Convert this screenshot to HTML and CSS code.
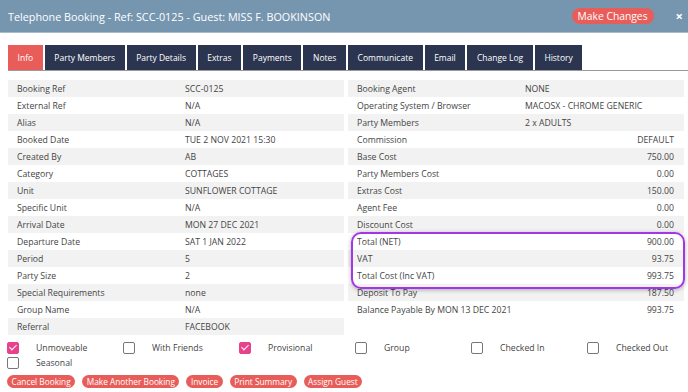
FILE: index.html
```html
<!DOCTYPE html>
<html lang="en">
<head>
  <meta charset="UTF-8" />
  <title>Telephone Booking - SCC-0125</title>
  <link rel="stylesheet" href="styles.css">
</head>
<body>
  <div class="header">
    <div class="title">Telephone Booking - Ref: SCC-0125 - Guest: MISS F. BOOKINSON</div>
    <span class="pill pill-lg">Make Changes</span>
    <span class="close">&times;</span>
  </div>

  <div class="tabs">
    <div class="tab active">Info</div>
    <div class="tab">Party Members</div>
    <div class="tab">Party Details</div>
    <div class="tab">Extras</div>
    <div class="tab">Payments</div>
    <div class="tab">Notes</div>
    <div class="tab">Communicate</div>
    <div class="tab">Email</div>
    <div class="tab">Change Log</div>
    <div class="tab">History</div>
  </div>

  <div class="details">
    <table class="info">
      <tr><td>Booking Ref</td><td>SCC-0125</td></tr>
      <tr><td>External Ref</td><td>N/A</td></tr>
      <tr><td>Alias</td><td>N/A</td></tr>
      <tr><td>Booked Date</td><td>TUE 2 NOV 2021 15:30</td></tr>
      <tr><td>Created By</td><td>AB</td></tr>
      <tr><td>Category</td><td>COTTAGES</td></tr>
      <tr><td>Unit</td><td>SUNFLOWER COTTAGE</td></tr>
      <tr><td>Specific Unit</td><td>N/A</td></tr>
      <tr><td>Arrival Date</td><td>MON 27 DEC 2021</td></tr>
      <tr><td>Departure Date</td><td>SAT 1 JAN 2022</td></tr>
      <tr><td>Period</td><td>5</td></tr>
      <tr><td>Party Size</td><td>2</td></tr>
      <tr><td>Special Requirements</td><td>none</td></tr>
      <tr><td>Group Name</td><td>N/A</td></tr>
      <tr><td>Referral</td><td>FACEBOOK</td></tr>
    </table>

    <div class="costs-wrap">
      <table class="info">
        <tr><td>Booking Agent</td><td>NONE</td></tr>
        <tr><td>Operating System / Browser</td><td>MACOSX - CHROME GENERIC</td></tr>
        <tr><td>Party Members</td><td>2 x ADULTS</td></tr>
        <tr><td>Commission</td><td class="num">DEFAULT</td></tr>
        <tr><td>Base Cost</td><td class="num">750.00</td></tr>
        <tr><td>Party Members Cost</td><td class="num">0.00</td></tr>
        <tr><td>Extras Cost</td><td class="num">150.00</td></tr>
        <tr><td>Agent Fee</td><td class="num">0.00</td></tr>
        <tr><td>Discount Cost</td><td class="num">0.00</td></tr>
        <tr><td>Total (NET)</td><td class="num">900.00</td></tr>
        <tr><td>VAT</td><td class="num">93.75</td></tr>
        <tr><td>Total Cost (Inc VAT)</td><td class="num">993.75</td></tr>
        <tr><td>Deposit To Pay</td><td class="num">187.50</td></tr>
        <tr><td>Balance Payable By MON 13 DEC 2021</td><td class="num">993.75</td></tr>
      </table>
      <div class="highlight"></div>
    </div>
  </div>

  <div class="flags">
    <label class="flag"><span class="box checked"></span>Unmoveable</label>
    <label class="flag"><span class="box"></span>With Friends</label>
    <label class="flag"><span class="box checked"></span>Provisional</label>
    <label class="flag"><span class="box"></span>Group</label>
    <label class="flag"><span class="box"></span>Checked In</label>
    <label class="flag"><span class="box"></span>Checked Out</label>
    <label class="flag"><span class="box"></span>Seasonal</label>
  </div>

  <div class="actions">
    <span class="pill">Cancel Booking</span>
    <span class="pill">Make Another Booking</span>
    <span class="pill">Invoice</span>
    <span class="pill">Print Summary</span>
    <span class="pill">Assign Guest</span>
  </div>
</body>
</html>
```

FILE: styles.css
```css
body {
  font-family: 'Open Sans', 'Liberation Sans', sans-serif;
  margin: 0;
  padding: 0;
  background: #ffffff;
  color: #333;
}

.header {
  height: 32px;
  background: #7696b0;
  border-bottom: 1px solid #a9bccb;
  display: flex;
  align-items: center;
  padding: 0 8px;
  color: #fff;
}

.title {
  font-size: 10.8px;
  flex: 1;
}

.pill {
  background: #e85d5a;
  color: #fff;
  border-radius: 8px;
  font-size: 8.3px;
  line-height: 13px;
  padding: 0 4.5px;
  display: inline-block;
  white-space: nowrap;
}

.pill-lg {
  font-size: 10.3px;
  line-height: 16px;
  border-radius: 9px;
  padding: 0 6px;
  margin-right: 22px;
}

.close {
  font-size: 13px;
  font-weight: bold;
  margin-right: -3px;
}

/* tabs */
.tabs {
  display: flex;
  gap: 2px;
  margin: 12px 0 0 8px;
  border-bottom: 1px solid #9a9a9a;
}

.tab {
  background: #2b3550;
  color: #fff;
  font-size: 8.5px;
  height: 25px;
  line-height: 25px;
  padding: 0 9.6px;
}

.tab.active {
  background: #e85d5a;
}

/* info tables */
.details {
  display: grid;
  grid-template-columns: 336px 336px;
  gap: 4px;
  margin: 9px 0 0 8px;
}

.costs-wrap {
  position: relative;
}

table.info {
  width: 100%;
  table-layout: fixed;
  border-collapse: collapse;
  font-size: 8.7px;
  color: #444;
}

table.info td {
  height: 17px;
  padding: 0 9px;
  width: 50%;
  white-space: nowrap;
  overflow: visible;
}

table.info tr:nth-child(odd) {
  background: #f2f2f2;
}

table.info td.num {
  text-align: right;
  padding-right: 10px;
}

.highlight {
  position: absolute;
  left: 3px;
  right: -1px;
  top: 152px;
  height: 53px;
  border: 2px solid #a436e8;
  border-radius: 10px;
  box-shadow: 0 1px 4px rgba(0,0,0,0.3);
}

/* flags */
.flags {
  display: grid;
  grid-template-columns: repeat(6, 116px);
  row-gap: 3px;
  margin: 7px 0 0 7px;
  font-size: 8.7px;
  color: #444;
}

.flag {
  display: flex;
  align-items: center;
}

.box {
  width: 10px;
  height: 10px;
  border: 1px solid #777;
  border-radius: 2px;
  margin-right: 17px;
  position: relative;
}

.box.checked {
  background: #e8428c;
  border-color: #e8428c;
}

.box.checked::after {
  content: "";
  position: absolute;
  left: 3px;
  top: 0;
  width: 3px;
  height: 6px;
  border: solid #fff;
  border-width: 0 1.5px 1.5px 0;
  transform: rotate(45deg);
}

/* bottom buttons */
.actions {
  display: flex;
  gap: 7px;
  margin: 6px 0 0 7px;
}
```
